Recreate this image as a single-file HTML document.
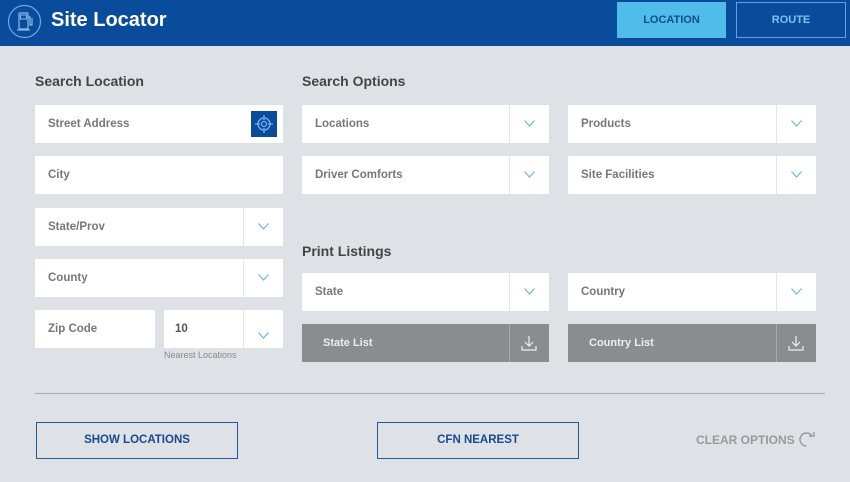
<!DOCTYPE html>
<html><head><style>
*{margin:0;padding:0;box-sizing:border-box}
body{width:850px;height:482px;background:#dee2e6;font-family:"Liberation Sans",sans-serif;position:relative;overflow:hidden}
.hdr{position:absolute;left:0;top:0;width:850px;height:46px;background:#0a4c9c}
.t{position:absolute;left:51px;top:9px;color:#fff;font-size:20px;font-weight:bold}
.btn{position:absolute;font-size:11px;font-weight:bold;text-align:center;line-height:36px}
.h{position:absolute;font-size:14px;font-weight:bold;color:#444}
.f{position:absolute;background:#fff;height:38px;font-size:11.5px;font-weight:bold;color:#777;line-height:38px;padding-left:13px}
.dd::after{content:"";position:absolute;right:0;top:0;width:39px;height:38px;border-left:1px solid #e3e6e9}
.ch{position:absolute;right:14px;top:15px;width:11px;height:7px}
.g{position:absolute;background:#8a8c8e;height:38px;font-size:11px;font-weight:bold;color:#eee;line-height:38px;padding-left:21px}
.g::after{content:"";position:absolute;right:39px;top:0;height:38px;border-left:1px solid #a8aaac}
.dl{position:absolute;right:11px;top:10px}
.ob{position:absolute;border:1px solid #1f5a9c;height:37px;width:202px;font-size:11.5px;font-weight:bold;color:#174a8a;text-align:center;line-height:35px}
</style></head><body>
<div class="hdr">
<svg style="position:absolute;left:7px;top:4px" width="35" height="35" viewBox="0 0 35 35"><circle cx="17.5" cy="17.5" r="16" fill="none" stroke="#6fa9e0" stroke-width="1.2"/><rect x="12" y="9" width="9" height="16" rx="1" fill="none" stroke="#8bbbe8" stroke-width="1.2"/><rect x="13.5" y="11" width="6" height="4" fill="none" stroke="#8bbbe8"/><path d="M21 13h2v8h2v-7" fill="none" stroke="#8bbbe8" stroke-width="1.2"/><path d="M10 26h13" stroke="#8bbbe8" stroke-width="1.2"/></svg>
<div class="t">Site Locator</div>
<div class="btn" style="left:617px;top:2px;width:109px;height:36px;background:#4fbce9;color:#0d4d90">LOCATION</div>
<div class="btn" style="left:736px;top:2px;width:110px;height:36px;border:1px solid #5fa3e0;color:#7cc4f0;line-height:34px">ROUTE</div>
</div>
<div class="h" style="left:35px;top:73px">Search Location</div>
<div class="h" style="left:302px;top:73px">Search Options</div>
<div class="h" style="left:302px;top:243px">Print Listings</div>

<div class="f" style="left:35px;top:105px;width:248px">Street Address
<div style="position:absolute;left:216px;top:6px;width:26px;height:26px;background:#0a4c9c"><svg width="26" height="26" viewBox="0 0 26 26"><circle cx="13" cy="13" r="6" fill="none" stroke="#6fb4ea" stroke-width="1.3"/><circle cx="13" cy="13" r="2.5" fill="none" stroke="#6fb4ea" stroke-width="1.2"/><path d="M13 4v5M13 17v5M4 13h5M17 13h5" stroke="#6fb4ea" stroke-width="1.3"/></svg></div></div>
<div class="f" style="left:35px;top:156px;width:248px">City</div>
<div class="f dd" style="left:35px;top:208px;width:248px">State/Prov<svg class="ch" viewBox="0 0 11 7"><path d="M.5 .5 5.5 6 10.5 .5" fill="none" stroke="#6fb4da" stroke-width="1.2"/></svg></div>
<div class="f dd" style="left:35px;top:259px;width:248px">County<svg class="ch" viewBox="0 0 11 7"><path d="M.5 .5 5.5 6 10.5 .5" fill="none" stroke="#6fb4da" stroke-width="1.2"/></svg></div>
<div class="f" style="left:35px;top:310px;width:120px">Zip Code</div>
<div class="f dd" style="left:164px;top:310px;width:119px;padding-left:11px;color:#555">10<svg class="ch" style="top:22px" viewBox="0 0 11 7"><path d="M.5 .5 5.5 6 10.5 .5" fill="none" stroke="#6fb4da" stroke-width="1.2"/></svg></div>
<div style="position:absolute;left:164px;top:350px;font-size:9px;color:#888">Nearest Locations</div>

<div class="f dd" style="left:302px;top:105px;width:247px">Locations<svg class="ch" viewBox="0 0 11 7"><path d="M.5 .5 5.5 6 10.5 .5" fill="none" stroke="#6fb4da" stroke-width="1.2"/></svg></div>
<div class="f dd" style="left:568px;top:105px;width:248px">Products<svg class="ch" viewBox="0 0 11 7"><path d="M.5 .5 5.5 6 10.5 .5" fill="none" stroke="#6fb4da" stroke-width="1.2"/></svg></div>
<div class="f dd" style="left:302px;top:156px;width:247px">Driver Comforts<svg class="ch" viewBox="0 0 11 7"><path d="M.5 .5 5.5 6 10.5 .5" fill="none" stroke="#6fb4da" stroke-width="1.2"/></svg></div>
<div class="f dd" style="left:568px;top:156px;width:248px">Site Facilities<svg class="ch" viewBox="0 0 11 7"><path d="M.5 .5 5.5 6 10.5 .5" fill="none" stroke="#6fb4da" stroke-width="1.2"/></svg></div>
<div class="f dd" style="left:302px;top:273px;width:247px">State<svg class="ch" viewBox="0 0 11 7"><path d="M.5 .5 5.5 6 10.5 .5" fill="none" stroke="#6fb4da" stroke-width="1.2"/></svg></div>
<div class="f dd" style="left:568px;top:273px;width:248px">Country<svg class="ch" viewBox="0 0 11 7"><path d="M.5 .5 5.5 6 10.5 .5" fill="none" stroke="#6fb4da" stroke-width="1.2"/></svg></div>
<div class="g" style="left:302px;top:324px;width:247px">State List<svg class="dl" width="18" height="18" viewBox="0 0 18 18"><path d="M9 2v10M5 8l4 4 4-4M2 12v4h14v-4" fill="none" stroke="#eee" stroke-width="1.2"/></svg></div>
<div class="g" style="left:568px;top:324px;width:248px">Country List<svg class="dl" width="18" height="18" viewBox="0 0 18 18"><path d="M9 2v10M5 8l4 4 4-4M2 12v4h14v-4" fill="none" stroke="#eee" stroke-width="1.2"/></svg></div>

<div style="position:absolute;left:35px;top:393px;width:790px;height:1px;background:#a9acaf"></div>
<div class="ob" style="left:36px;top:422px">SHOW LOCATIONS</div>
<div class="ob" style="left:377px;top:422px">CFN NEAREST</div>
<div style="position:absolute;left:696px;top:433px;font-size:12px;font-weight:bold;color:#999">CLEAR OPTIONS</div>
<svg style="position:absolute;left:798px;top:431px" width="18" height="17" viewBox="0 0 18 17"><path d="M14 5A6.5 6.5 0 1 0 8.5 15" fill="none" stroke="#999" stroke-width="1.4"/><path d="M11 5h5V1" fill="none" stroke="#999" stroke-width="1.4"/></svg>
</body></html>
